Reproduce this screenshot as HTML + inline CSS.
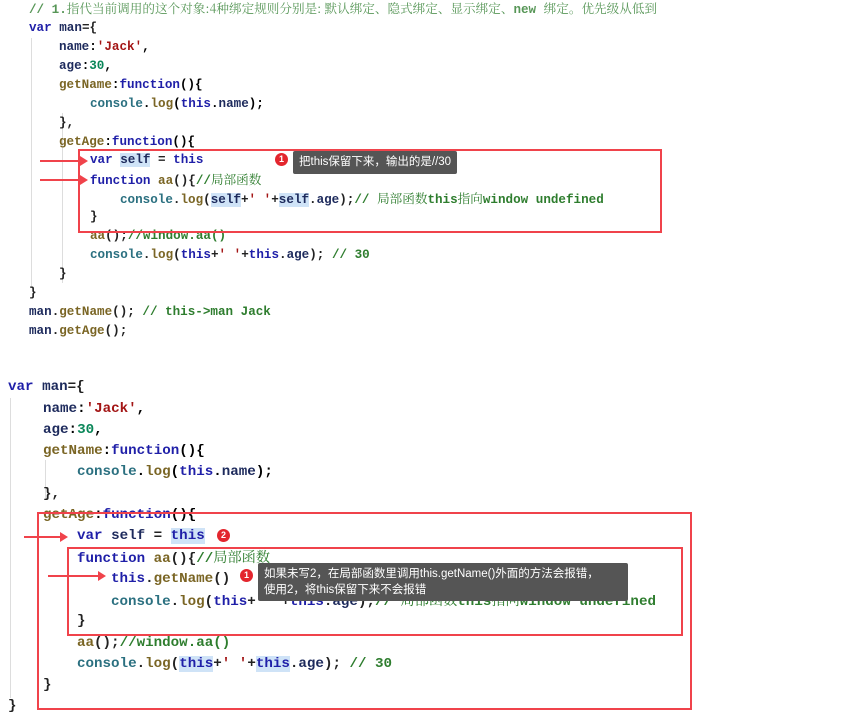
<!DOCTYPE html>
<html><head><meta charset="utf-8"><style>
body{margin:0;width:858px;height:725px;background:#fff;position:relative;overflow:hidden;font-family:"Liberation Mono","Noto Sans CJK SC",monospace;}
.l{position:absolute;white-space:pre;line-height:18px;font-weight:bold;}
.t{font-size:12.6px;}
.b{font-size:14.2px;line-height:20px;}
.k{color:#1f1fa8}.p{color:#1d2a5c}.f{color:#7a6524}.s{color:#a31515}.n{color:#098658}.c{color:#2e7d2e}.o{color:#2b7080}.d{color:#222}
.cn{font-family:"Noto Serif CJK SC",serif;font-weight:normal}
.hl{background:#cfe3f7}
.box{position:absolute;border:2px solid #f0434b;}
.tip{position:absolute;background:#555;color:#fff;font-family:"Liberation Sans","Noto Sans CJK SC",sans-serif;font-size:11.5px;padding:3px 6px;line-height:17px;border-radius:2px;}
.bd{position:absolute;width:13px;height:13px;border-radius:50%;background:#e3262e;color:#fff;font:bold 9px "Liberation Sans",sans-serif;text-align:center;line-height:13px;}
.ar{position:absolute;height:2px;background:#f0434b;}
.ar:after{content:"";position:absolute;right:-4px;top:-4px;border-left:8px solid #f0434b;border-top:5px solid transparent;border-bottom:5px solid transparent;}
.g{position:absolute;width:1px;background:#ddd;}
</style></head><body>
<div class="l t c" style="left:29px;top:-1px;opacity:.8">// 1.<span class="cn">指代当前调用的这个对象:4种绑定规则分别是: 默认绑定、隐式绑定、显示绑定、</span>new <span class="cn">绑定。优先级从低到</span></div>
<div class="g" style="left:31px;top:38px;height:250px"></div>
<div class="g" style="left:62px;top:113px;height:170px"></div>
<div class="l t d" style="left:29px;top:19px"><span class="k">var</span> <span class="p">man</span>={</div>
<div class="l t" style="left:59px;top:38px"><span class="p">name</span>:<span class="s">'Jack'</span>,</div>
<div class="l t" style="left:59px;top:57px"><span class="p">age</span>:<span class="n">30</span>,</div>
<div class="l t" style="left:59px;top:76px"><span class="f">getName</span>:<span class="k">function</span>(){</div>
<div class="l t" style="left:90px;top:95px"><span class="o">console</span>.<span class="f">log</span>(<span class="k">this</span>.<span class="p">name</span>);</div>
<div class="l t d" style="left:59px;top:114px">},</div>
<div class="l t" style="left:59px;top:133px"><span class="f">getAge</span>:<span class="k">function</span>(){</div>
<div class="l t d" style="left:90px;top:151px"><span class="k">var</span> <span class="p hl">self</span> = <span class="k">this</span></div>
<div class="l t d" style="left:90px;top:170px"><span class="k">function</span> <span class="f">aa</span>(){<span class="c">//<span class="cn">局部函数</span></span></div>
<div class="l t d" style="left:120px;top:189px"><span class="o">console</span>.<span class="f">log</span>(<span class="p hl">self</span>+<span class="s">' '</span>+<span class="p hl">self</span>.<span class="p">age</span>);<span class="c">// <span class="cn">局部函数</span>this<span class="cn">指向</span>window undefined</span></div>
<div class="l t d" style="left:90px;top:208px">}</div>
<div class="l t d" style="left:90px;top:227px"><span class="f">aa</span>();<span class="c">//window.aa()</span></div>
<div class="l t d" style="left:90px;top:246px"><span class="o">console</span>.<span class="f">log</span>(<span class="k">this</span>+<span class="s">' '</span>+<span class="k">this</span>.<span class="p">age</span>); <span class="c">// 30</span></div>
<div class="l t d" style="left:59px;top:265px">}</div>
<div class="l t d" style="left:29px;top:284px">}</div>
<div class="l t d" style="left:29px;top:303px"><span class="p">man</span>.<span class="f">getName</span>(); <span class="c">// this-&gt;man Jack</span></div>
<div class="l t d" style="left:29px;top:322px"><span class="p">man</span>.<span class="f">getAge</span>();</div>
<div class="box" style="left:78px;top:149px;width:580px;height:80px"></div>
<div class="ar" style="left:40px;top:160px;width:44px"></div>
<div class="ar" style="left:40px;top:179px;width:44px"></div>
<div class="bd" style="left:275px;top:153px">1</div>
<div class="tip" style="left:293px;top:151px">把this保留下来，输出的是//30</div>

<div class="g" style="left:10px;top:398px;height:300px"></div>
<div class="g" style="left:45px;top:460px;height:40px"></div>
<div class="l b d" style="left:8px;top:377px"><span class="k">var</span> <span class="p">man</span>={</div>
<div class="l b" style="left:43px;top:399px"><span class="p">name</span>:<span class="s">'Jack'</span>,</div>
<div class="l b" style="left:43px;top:420px"><span class="p">age</span>:<span class="n">30</span>,</div>
<div class="l b" style="left:43px;top:441px"><span class="f">getName</span>:<span class="k">function</span>(){</div>
<div class="l b" style="left:77px;top:462px"><span class="o">console</span>.<span class="f">log</span>(<span class="k">this</span>.<span class="p">name</span>);</div>
<div class="l b d" style="left:43px;top:484px">},</div>
<div class="l b" style="left:43px;top:505px"><span class="f">getAge</span>:<span class="k">function</span>(){</div>
<div class="l b d" style="left:77px;top:526px"><span class="k">var</span> <span class="p">self</span> = <span class="k hl">this</span></div>
<div class="l b d" style="left:77px;top:547px"><span class="k">function</span> <span class="f">aa</span>(){<span class="c">//<span class="cn">局部函数</span></span></div>
<div class="l b d" style="left:111px;top:569px"><span class="k">this</span>.<span class="f">getName</span>()</div>
<div class="l b d" style="left:111px;top:590px"><span class="o">console</span>.<span class="f">log</span>(<span class="k">this</span>+<span class="s">' '</span>+<span class="k">this</span>.<span class="p">age</span>);<span class="c">// <span class="cn">局部函数</span>this<span class="cn">指向</span>window undefined</span></div>
<div class="l b d" style="left:77px;top:611px">}</div>
<div class="l b d" style="left:77px;top:633px"><span class="f">aa</span>();<span class="c">//window.aa()</span></div>
<div class="l b d" style="left:77px;top:654px"><span class="o">console</span>.<span class="f">log</span>(<span class="k hl">this</span>+<span class="s">' '</span>+<span class="k hl">this</span>.<span class="p">age</span>); <span class="c">// 30</span></div>
<div class="l b d" style="left:43px;top:675px">}</div>
<div class="l b d" style="left:8px;top:696px">}</div>
<div class="box" style="left:37px;top:512px;width:651px;height:194px"></div>
<div class="box" style="left:67px;top:547px;width:612px;height:85px"></div>
<div class="ar" style="left:24px;top:536px;width:40px"></div>
<div class="ar" style="left:48px;top:575px;width:54px"></div>
<div class="bd" style="left:217px;top:529px">2</div>
<div class="bd" style="left:240px;top:569px">1</div>
<div class="tip" style="left:258px;top:563px;width:358px;line-height:16px">如果未写2，在局部函数里调用this.getName()外面的方法会报错，<br>使用2，将this保留下来不会报错</div>
</body></html>
